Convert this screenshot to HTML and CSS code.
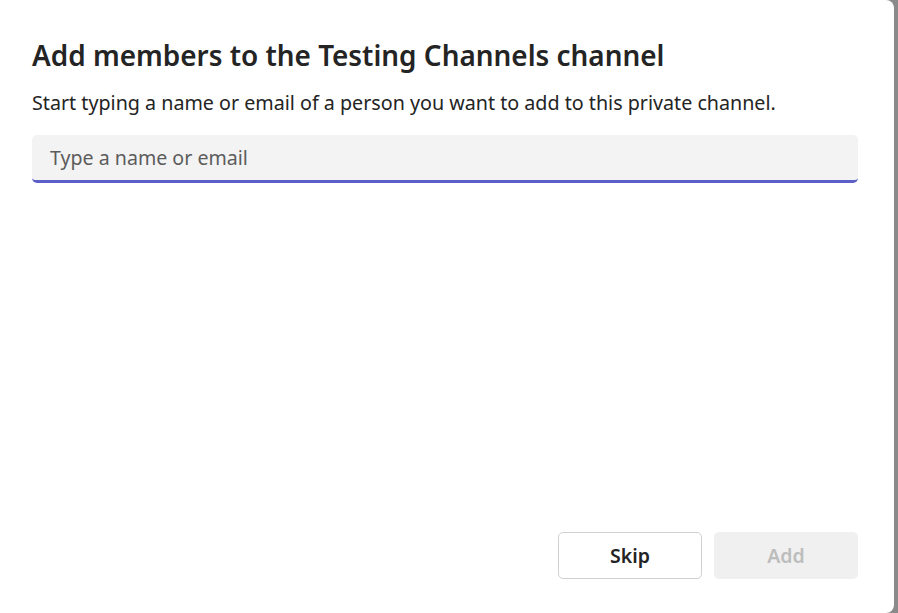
FILE: index.html
```html
<!DOCTYPE html>
<html lang="en">
<head>
  <meta charset="UTF-8" />
  <meta name="viewport" content="width=device-width, initial-scale=1.0" />
  <title>Add members</title>
  <link rel="stylesheet" href="styles.css">
</head>
<body>

  <!-- Diálogo para agregar miembros al canal -->
  <div class="dialogo">
    <h1 class="titulo">Add members to the Testing Channels channel</h1>
    <p class="descripcion">Start typing a name or email of a person you want to add to this private channel.</p>

    <div class="campo">
      <input type="text" placeholder="Type a name or email" />
    </div>

    <div class="acciones">
      <button class="btn btn-secundario">Skip</button>
      <button class="btn btn-primario" disabled>Add</button>
    </div>
  </div>

</body>
</html>
```

FILE: styles.css
```css
html, body {
  height: 100%;
}

body {
  margin: 0;
  background-color: #8a8a8a;
  font-family: "Noto Sans", "Open Sans", Arial, sans-serif;
  color: #242424;
  overflow: hidden;
}

.dialogo {
  width: 894px;
  height: 613px;
  box-sizing: border-box;
  background-color: white;
  border-radius: 0 8px 8px 0;
  padding: 36px 36px 34px 32px;
  display: flex;
  flex-direction: column;
}

.titulo {
  margin: 0;
  font-size: 27.9px;
  font-weight: 600;
  line-height: 38px;
}

.descripcion {
  margin: 16px 0 0;
  font-size: 19.7px;
  line-height: 26px;
}

.campo {
  margin-top: 19px;
}

.campo input {
  width: 100%;
  box-sizing: border-box;
  height: 48px;
  border: none;
  border-bottom: 3px solid #5b5fc7;
  border-radius: 5px;
  background-color: #f3f3f3;
  padding: 0 18px;
  font-family: inherit;
  font-size: 19.6px;
  color: #242424;
  outline: none;
}

.campo input::placeholder {
  color: #5c5c5c;
}

.acciones {
  margin-top: auto;
  display: flex;
  justify-content: flex-end;
  gap: 12px;
}

.btn {
  width: 144px;
  height: 47px;
  border-radius: 5px;
  font-family: inherit;
  font-size: 19.5px;
  font-weight: 600;
  cursor: pointer;
}

.btn-secundario {
  background-color: white;
  border: 1px solid #d1d1d1;
  color: #242424;
}

.btn-primario {
  background-color: #f0f0f0;
  border: none;
  color: #bdbdbd;
  cursor: default;
}
```
